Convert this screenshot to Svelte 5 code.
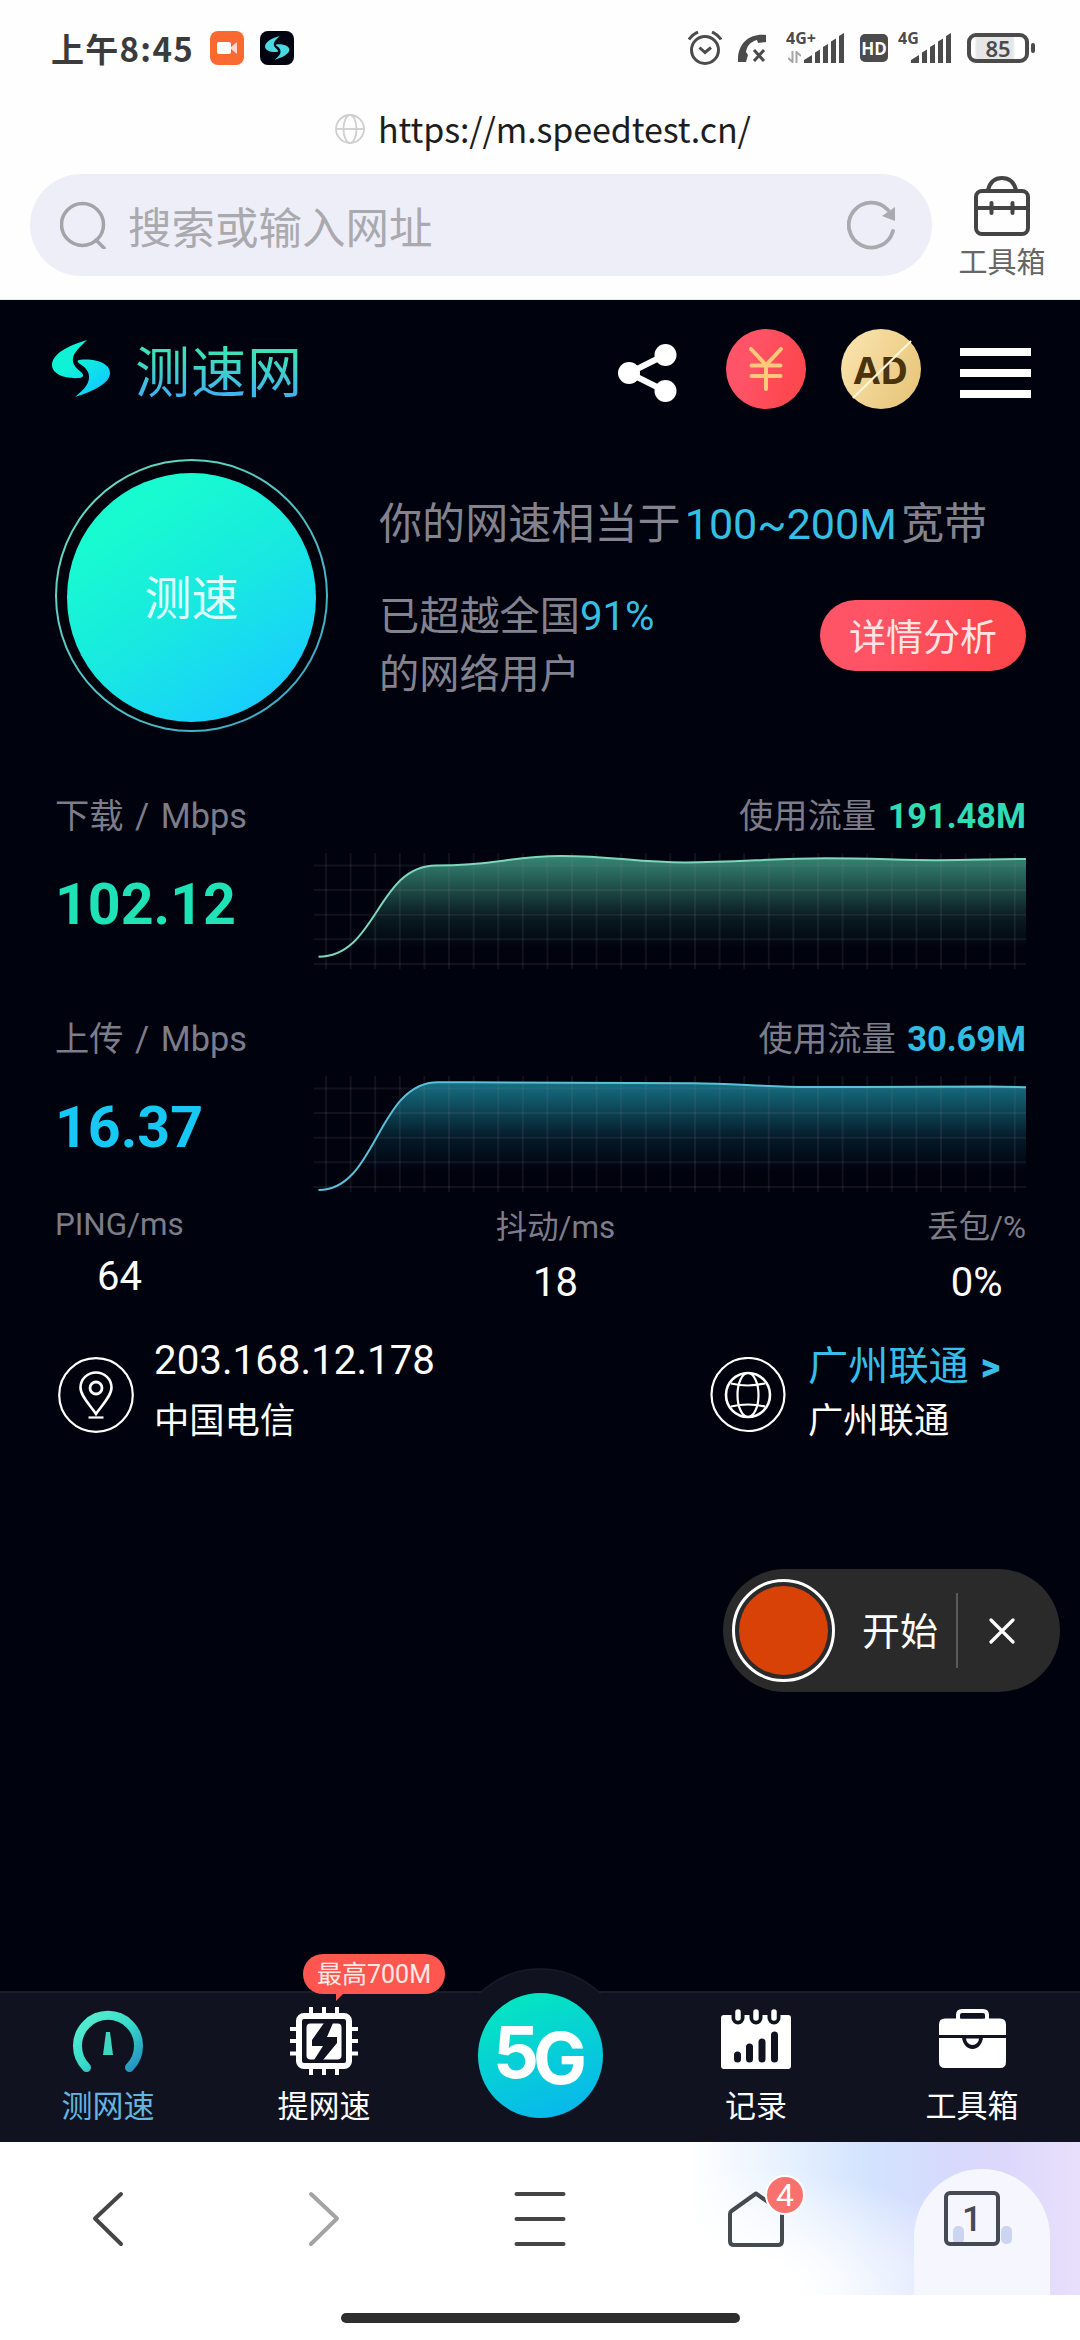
<script>
const vLines = Array.from({ length: 29 }, (_, i) => 12 + i * 24.6);
const hLines = Array.from({ length: 5 }, (_, i) => 12.5 + i * 24.6);

const speeds = [
  {
    id: "down",
    label: "下载 / Mbps",
    value: "102.12",
    used: "191.48M",
    color: "#3f9f87",
    line: "#7fd6bd",
    path: "M4.5 103.7 C63 103.7 63 12.5 122 12.5 C185 12.5 195 3 247 3 C300 3 322 9.5 371 9.5 C425 9.5 458 5.2 512 5.2 C560 5.2 585 7.2 622 7.2 C660 7.2 680 6 712 6",
  },
  {
    id: "up",
    label: "上传 / Mbps",
    value: "16.37",
    used: "30.69M",
    color: "#1a8ba0",
    line: "#5cc0d8",
    path: "M4.5 114 C63 114 63 6.2 124 6.2 C200 6.2 270 7.4 380 7.2 C420 7.4 450 11 495 11 C560 11.2 640 10.5 676 10.5 L712 11.2",
  },
];

const stats = [
  { label: "PING/ms", value: "64" },
  { label: "抖动/ms", value: "18", cjk: true },
  { label: "丢包/%", value: "0%", cjk: true },
];
</script>

{#snippet signal()}
  <svg class="signal" width="40" height="30" viewBox="0 0 40 30" fill="#4b4b4b">
    <path d="M0 30v-3l8-5v8z" />
    <path d="M11 19.5l5-3V30h-5z" />
    <path d="M19 14l5-3v19h-5z" />
    <path d="M27 8.500l5-3V30h-5z" />
    <path d="M35 3l5-3v30h-5z" />
  </svg>
{/snippet}

{#snippet swoosh()}
  <path d="M35 0 C14 6 0 15 0 25 C0 34 13 39 27 38 C32 37.500 32 35 29 32 C24 28 20 24 21 18 C22 12 29 6 35 0Z" />
  <path d="M27 20 C43 18 58 23 58 33 C58 43 42 51 23 57 C31 50 37 45 37 37 C37 31 33 27 28 24 C25 22 25 20.500 27 20Z" />
{/snippet}

<div class="screen">
  <div class="status">
    <span class="clock">上午8:45</span>
    <svg class="app-icon" width="34" height="34" viewBox="0 0 34 34">
      <rect width="34" height="34" rx="8" fill="#fb6930" />
      <rect x="7" y="11" width="14" height="12" rx="2" fill="#fff" />
      <path d="M21 16l6-5v12l-6-5z" fill="#ffd9c8" />
    </svg>
    <svg class="app-icon" width="34" height="34" viewBox="0 0 34 34">
      <rect width="34" height="34" rx="8" fill="#020311" />
      <g transform="translate(5 5) scale(.42)" fill="#4ad9e0">{@render swoosh()}</g>
    </svg>
    <div class="status-right">
      <svg width="34" height="34" viewBox="0 0 34 34" fill="none" stroke="#4b4b4b" stroke-width="3">
        <circle cx="17" cy="19" r="13.500" />
        <path d="M11.500 16.500l5.500 5 6-5M1 8.500q3-5 9-7.500M33 8.500q-3-5-9-7.500" />
      </svg>
      <svg class="call" width="29" height="29" viewBox="0 0 29 29">
        <path d="M0 28C-1 10 11-1 28 1v7l-8 1-1-3C12 8 9 12 8 18l2 3-2 7z" fill="#4b4b4b" />
        <path d="M16 16l10 11M26 16L16 27" fill="none" stroke="#4b4b4b" stroke-width="3" />
      </svg>
      <div class="net">
        <span class="net-label">4G+</span>
        <svg class="updown" width="13" height="12" viewBox="0 0 13 12" fill="none" stroke="#a5a5a5" stroke-width="2">
          <path d="M4.500 0v11L0 7M8.500 12V1L13 5" />
        </svg>
        {@render signal()}
      </div>
      <span class="hd">HD</span>
      <div class="net second">
        <span class="net-label">4G</span>
        {@render signal()}
      </div>
      <span class="battery"><b>85</b></span>
      <i class="nub"></i>
    </div>
  </div>

  <div class="address">
    <svg width="30" height="30" viewBox="0 0 30 30" fill="none" stroke="#cfcfcf" stroke-width="1.800">
      <circle cx="15" cy="15" r="14" />
      <ellipse cx="15" cy="15" rx="6.500" ry="14" />
      <path d="M1 15h28" />
    </svg>
    <span>https://m.speedtest.cn/</span>
  </div>

  <div class="search-row">
    <div class="search">
      <svg width="46" height="48" viewBox="0 0 46 48" fill="none" stroke="#a3a3a8" stroke-width="3.500" stroke-linecap="round">
        <circle cx="22.500" cy="23.500" r="21" />
        <path d="M36 39l8 8" />
      </svg>
      <span>搜索或输入网址</span>
      <svg class="reload" width="49" height="50" viewBox="0 0 49 50">
        <path d="M46 31A22.500 22.500 0 1 1 41 10" fill="none" stroke="#a9a9ae" stroke-width="3.800" stroke-linecap="round" />
        <path d="M48 7v14l-13-5z" fill="#a9a9ae" />
      </svg>
    </div>
    <div class="toolbox">
      <svg width="58" height="60" viewBox="0 0 58 60" fill="none" stroke="#444" stroke-width="4" stroke-linecap="round">
        <path d="M15 14Q18 2 29 2T43 14" />
        <rect x="3" y="15" width="52" height="43" rx="6" />
        <path d="M3 32h52M18.500 27v10M39.500 27v10" />
      </svg>
      <span>工具箱</span>
    </div>
  </div>

  <main>
    <header>
      <svg width="58" height="58" viewBox="0 0 58 58" fill="url(#brand)">
        <defs>
          <linearGradient id="brand" gradientUnits="userSpaceOnUse" x1="10" y1="5" x2="45" y2="52">
            <stop offset=".35" stop-color="#10f2d6" />
            <stop offset="1" stop-color="#10ccff" />
          </linearGradient>
        </defs>
        {@render swoosh()}
      </svg>
      <span class="brand-name">测速网</span>
      <svg class="share" width="59" height="58" viewBox="0 0 59 58" fill="#fff">
        <path d="M47 11L11 29l36 18" fill="none" stroke="#fff" stroke-width="6" />
        <circle cx="11" cy="29" r="11" />
        <circle cx="47.500" cy="11" r="11" />
        <circle cx="47.500" cy="47" r="11" />
      </svg>
      <div class="coin yen">
        <svg width="34" height="44" viewBox="0 0 34 44" fill="none" stroke="#ffc977" stroke-width="4" stroke-linecap="round">
          <path d="M2 2l15 16L32 2M17 18v24M2.500 18.500h29M2.500 29h29" />
        </svg>
      </div>
      <div class="coin ad">
        <span>AD</span>
        <svg width="80" height="80" viewBox="0 0 80 80"><path d="M12 69L70 12" stroke="#fff5d8" stroke-width="2.200" /></svg>
      </div>
      <div class="menu"><i></i><i></i><i></i></div>
    </header>

    <section class="hero">
      <div class="ring"><button class="start">测速</button></div>
      <div class="summary">
        <p class="equal">你的网速相当于<em>100~200M</em>宽带</p>
        <div class="rank">
          <p>已超越全国<em>91%</em><br />的网络用户</p>
          <button class="detail">详情分析</button>
        </div>
      </div>
    </section>

    {#each speeds as s (s.id)}
      <section class="speed {s.id}">
        <div class="speed-head">
          <span>{s.label}</span>
          <span>使用流量 <b>{s.used}</b></span>
        </div>
        <div class="speed-body">
          <strong>{s.value}</strong>
          <svg width="712" height="116" viewBox="0 0 712 116" fill="none">
            <defs>
              <linearGradient id="fill-{s.id}" gradientUnits="userSpaceOnUse" x1="0" y1="0" x2="0" y2="96">
                <stop offset="0" stop-color={s.color} stop-opacity=".88" />
                <stop offset=".35" stop-color={s.color} stop-opacity=".5" />
                <stop offset=".65" stop-color={s.color} stop-opacity=".17" />
                <stop offset="1" stop-color={s.color} stop-opacity="0" />
              </linearGradient>
            </defs>
            <path d="{s.path} V116 H4.500Z" fill="url(#fill-{s.id})" />
            <g stroke="#8c8296" stroke-opacity=".13" stroke-width="2">
              {#each vLines as x}
                <path d="M{x} 0V116" />
              {/each}
              {#each hLines as y}
                <path d="M0 {y}H712" />
              {/each}
            </g>
            <path d={s.path} stroke={s.line} stroke-width="2" />
          </svg>
        </div>
      </section>
    {/each}

    <section class="stats">
      {#each stats as s}
        <div class="stat" class:cjk={s.cjk}>
          <span>{s.label}</span>
          <b>{s.value}</b>
        </div>
      {/each}
    </section>

    <section class="nodes">
      <svg class="pin" width="76" height="76" viewBox="0 0 76 76" fill="none" stroke="#fff" stroke-width="2.200">
        <circle cx="38" cy="38" r="36.800" />
        <path d="M38 57C32 48 22.500 39 22.500 30.500a15.500 15 0 0 1 31 0C53.500 39 44 48 38 57Z" stroke-width="2.600" />
        <circle cx="38" cy="31" r="6" stroke-width="2.800" />
        <path d="M30.500 60.500h15" />
      </svg>
      <div class="node">
        <span class="ip">203.168.12.178</span>
        <span class="isp">中国电信</span>
      </div>
      <svg class="globe" width="76" height="76" viewBox="0 0 76 76" fill="none" stroke="#fff" stroke-width="2.200">
        <circle cx="38" cy="37.500" r="36.500" />
        <circle cx="38" cy="38" r="22" stroke-width="2.600" />
        <ellipse cx="38" cy="38" rx="10.500" ry="22" />
        <path d="M21 26.500q17 4 34 0M21 49.500q17-4 34 0" />
      </svg>
      <div class="node server">
        <span class="city">广州联通 <b>&gt;</b></span>
        <span class="isp">广州联通</span>
      </div>
    </section>

    <div class="recorder">
      <div class="record"><i></i></div>
      <span>开始</span>
      <svg width="26" height="26" viewBox="0 0 26 26" stroke="#fff" stroke-width="3.200" stroke-linecap="round">
        <path d="M2 2l22 22M24 2L2 24" />
      </svg>
    </div>

    <nav class="tabs">
      <div class="bump"></div>
      <div class="tab active">
        <svg width="70" height="68" viewBox="0 0 70 68">
          <defs>
            <linearGradient id="gauge" x1="0" y1="0" x2="1" y2="1">
              <stop offset="0" stop-color="#5cf0d0" />
              <stop offset=".5" stop-color="#38dccb" />
              <stop offset="1" stop-color="#2391c0" />
            </linearGradient>
          </defs>
          <path d="M13.500 60.500A30.500 30.500 0 1 1 56.500 60.500" fill="none" stroke="url(#gauge)" stroke-width="9" stroke-linecap="round" />
          <path d="M33 25h4l3 23H30z" fill="#3fd5c0" />
        </svg>
        <span>测网速</span>
      </div>
      <div class="tab">
        <svg width="68" height="68" viewBox="0 0 68 68">
          <path d="M21 0v8M34 0v8M47 0v8M21 60v8M34 60v8M47 60v8M0 22h8M0 34h8M0 46.500h8M60 22h8M60 34h8M60 46.500h8" stroke="#fff" stroke-width="4" />
          <rect x="9" y="9" width="50" height="50" rx="5" fill="none" stroke="#fff" stroke-width="6" />
          <rect x="16.500" y="16.500" width="35" height="36" rx="4" fill="#fff" />
          <path d="M34 16h9l-6 14h10v6L33 53h-9l9-14H22v-6z" fill="#10131f" />
        </svg>
        <span>提网速</span>
        <div class="promo">最高700M</div>
      </div>
      <div class="tab five"><div class="disc"><span>5</span><span class="g">G</span></div></div>
      <div class="tab">
        <svg width="70" height="68" viewBox="0 0 70 68">
          <rect x="0" y="8" width="70" height="54" rx="3" fill="#fff" />
          <path d="M17 4v7M35 4v7M53 4v7" stroke="#10131f" stroke-width="13" stroke-linecap="round" />
          <path d="M17 5v6M35 5v6M53 5v6" stroke="#fff" stroke-width="5.500" stroke-linecap="round" />
          <path d="M16.500 48v4M28.500 40v12M41 35v17M53.500 28v24" stroke="#10131f" stroke-width="7" stroke-linecap="round" />
        </svg>
        <span>记录</span>
      </div>
      <div class="tab">
        <svg width="67" height="68" viewBox="0 0 67 68">
          <path d="M19 12V8q0-4 4-4h21q4 0 4 4v4" fill="none" stroke="#fff" stroke-width="4" />
          <path d="M6 11.500h55q6 0 6 6V28H0V17.500q0-6 6-6zM0 31h67v24q0 6-6 6H6q-6 0-6-6z" fill="#fff" />
          <path d="M22 8.500h22.500v3H22zM23 29a10.500 13 0 0 0 21 0z" fill="#10131f" />
          <path d="M27 31.500h13a6.500 6.500 0 0 1-13 0z" fill="#fff" />
        </svg>
        <span>工具箱</span>
      </div>
    </nav>
  </main>

  <div class="browser-nav">
    <div class="slot">
      <svg width="32" height="56" viewBox="0 0 32 56"><path d="M29 3L3 27.500L29 53" stroke="#454545" /></svg>
    </div>
    <div class="slot">
      <svg width="32" height="56" viewBox="0 0 32 56"><path d="M3 3l26 24.500L3 53" stroke="#a3a3a3" /></svg>
    </div>
    <div class="slot">
      <svg width="52" height="56" viewBox="0 0 52 56"><path d="M2.500 3h47M2.500 28h47M2.500 53h47" stroke="#454545" /></svg>
    </div>
    <div class="slot">
      <svg width="56" height="56" viewBox="0 0 56 56"><path d="M28 2.500L3.500 20Q2 21 2 23V50Q2 54 6 54H50Q54 54 54 50V21z" stroke="#454a4f" /></svg>
      <span class="count">4</span>
    </div>
    <div class="slot">
      <div class="ghost"><i></i><i></i></div>
      <span class="windows">1</span>
    </div>
  </div>
  <div class="home-bar"><i></i></div>
</div>

<style>
:global(body) {
  margin: 0;
  background: #fff;
}

.screen {
  display: flex;
  flex-direction: column;
  width: 1080px;
  height: 2340px;
  overflow: hidden;
  background: #fefefe;
  font-family: Roboto, "Noto Sans CJK SC", sans-serif;
}
svg {
  display: block;
  flex: none;
}
p {
  margin: 0;
}
button {
  border: none;
  padding: 0;
  font: inherit;
}

.status {
  display: flex;
  align-items: center;
  height: 96px;
  padding: 0 45px 0 51px;
}
.clock {
  width: 159px;
  color: #3b3b3b;
  font: 700 33px/36px "Noto Sans CJK SC", sans-serif;
  letter-spacing: 1.300px;
  white-space: nowrap;
}
.app-icon + .app-icon {
  margin-left: 16px;
}
.status-right {
  display: flex;
  align-items: center;
  margin-left: auto;
  color: #4b4b4b;
}
.call {
  margin-left: 16px;
}
.net {
  position: relative;
  display: flex;
  align-items: flex-end;
  justify-content: flex-end;
  width: 58px;
  height: 30px;
  margin-left: 19px;
}
.net.second {
  width: 53px;
  margin-left: 10px;
}
.net-label {
  position: absolute;
  top: -4px;
  left: 0;
  font: 700 16px/18px "Open Sans", sans-serif;
}
.updown {
  position: absolute;
  left: 2px;
  bottom: 0;
}
.hd {
  width: 28px;
  height: 28px;
  margin-left: 16px;
  border-radius: 5px;
  background: #4b4b4b;
  color: #fff;
  font: 700 17px/30px "Open Sans", sans-serif;
  text-align: center;
}
.battery {
  box-sizing: border-box;
  width: 62px;
  height: 30px;
  margin-left: 16px;
  border: 4px solid #4b4b4b;
  border-radius: 9px;
  background: linear-gradient(90deg, #fff 3px, #e6e6e6 6px, #e6e6e6 42px, #fff 44px);
  text-align: center;
}
.battery b {
  display: block;
  font: 600 22px/23px "Noto Sans", sans-serif;
}
.nub {
  width: 4px;
  height: 10px;
  margin-left: 2px;
  border-radius: 2px;
  background: #4b4b4b;
}

.address {
  display: flex;
  align-items: center;
  height: 66px;
  padding-left: 335px;
}
.address span {
  margin-left: 13px;
  color: #1d1d1d;
  font: 400 34px/50px "Noto Sans CJK SC", sans-serif;
  letter-spacing: -.1px;
}

.search-row {
  box-sizing: border-box;
  display: flex;
  height: 138px;
  padding: 12px 0 0 30px;
  border-bottom: 1px solid #e9e9ec;
}
.search {
  box-sizing: border-box;
  display: flex;
  flex: none;
  align-items: center;
  width: 902px;
  height: 102px;
  padding: 0 36px 0 30px;
  border-radius: 51px;
  background: #eeeef8;
}
.search span {
  margin-left: 22px;
  color: #a9a9ae;
  font-size: 43.500px;
}
.reload {
  margin-left: auto;
}
.toolbox {
  display: flex;
  flex-direction: column;
  align-items: center;
  width: 140px;
  margin-top: 2px;
}
.toolbox span {
  margin-top: 8px;
  color: #666;
  font-size: 29px;
  line-height: 38px;
}

main {
  position: relative;
  display: flex;
  flex-direction: column;
  height: 1842px;
  background: #00020e;
  color: #fff;
}
header {
  display: flex;
  align-items: center;
  height: 80px;
  padding: 29px 49px 0 52px;
}
.brand-name {
  margin: 7px 0 0 25px;
  background: linear-gradient(#3fe0b8 25%, #3fb4ee 80%);
  background-clip: text;
  color: transparent;
  font-size: 55px;
  font-weight: 400;
  line-height: 70px;
  letter-spacing: 1px;
}
.share {
  margin-top: 7px;
  margin-left: auto;
}
.coin {
  display: grid;
  place-items: center;
  width: 80px;
  height: 80px;
  border-radius: 50%;
}
.yen {
  margin-left: 49px;
  background: linear-gradient(110deg, #ff5468 30%, #fd4850 75%);
}
.ad {
  margin-left: 35px;
  background: linear-gradient(120deg, #fbe6b2, #e6c274);
}
.ad > * {
  grid-area: 1 / 1;
}
.ad span {
  color: #4b330c;
  font: 700 38px/40px "Open Sans", sans-serif;
}
.menu {
  display: grid;
  gap: 13px;
  width: 71px;
  margin: 7px 0 0 39px;
}
.menu i {
  height: 8px;
  background: #fff;
}

.hero {
  display: flex;
  height: 273px;
  margin: 50px 54px 0 55px;
}
.ring {
  box-sizing: border-box;
  display: grid;
  flex: none;
  place-items: center;
  width: 273px;
  height: 273px;
  border: 2px solid transparent;
  border-radius: 50%;
  background: linear-gradient(#00010a, #00010a) padding-box, linear-gradient(135deg, #6fe0c0, #35a5c8) border-box;
}
.start {
  width: 249px;
  height: 249px;
  padding-bottom: 5px;
  margin-top: 3px;
  border-radius: 50%;
  background: linear-gradient(145deg, #18fbd0 20%, #18e9e0 52%, #18cdff 88%);
  color: #dcfffc;
  font-size: 47px;
}
.summary {
  flex: 1;
  padding-top: 37px;
  margin-left: 51px;
  color: #83828f;
}
.summary em {
  color: #35bfe2;
  font-style: normal;
}
.equal {
  font-size: 43.100px;
  line-height: 58px;
  white-space: nowrap;
}
.equal em {
  margin: 0 4px;
}
.rank {
  display: flex;
  justify-content: space-between;
  margin-top: 34px;
  font-size: 40.200px;
  line-height: 58px;
}
.detail {
  width: 206px;
  height: 71px;
  padding-top: 6px;
  margin-top: 12px;
  border-radius: 36px;
  background: linear-gradient(100deg, #ff5366 30%, #fc474d 80%);
  color: #ffe4e6;
  font-size: 37px;
}

.speed {
  height: 172px;
  margin: 64px 54px 0 55px;
}
.speed.up {
  margin-top: 51px;
}
.speed-head {
  display: flex;
  justify-content: space-between;
  color: #7d7c89;
  font-size: 34.300px;
  line-height: 40px;
}
.speed-head span:first-child {
  word-spacing: 3px;
}
.speed-head b {
  margin-left: 3px;
  color: #2fdcb4;
}
.up .speed-head b {
  color: #31bde2;
}
.speed-body {
  display: flex;
  justify-content: space-between;
  margin-top: 17px;
}
.speed strong {
  margin-top: 23px;
  color: #1fe3b7;
  font-size: 57.300px;
  line-height: 58px;
}
.speed.up strong {
  color: #18c8f4;
}

.stats {
  display: flex;
  justify-content: space-between;
  margin: 16px 54px 0 55px;
}
.stat {
  display: flex;
  flex-direction: column;
  align-items: center;
  gap: 10px;
}
.stat span {
  color: #7d7c89;
  font-size: 31.400px;
  line-height: 36px;
}
.stat.cjk span {
  line-height: 42px;
}
.stat b {
  font-size: 40px;
  font-weight: 400;
  line-height: 47px;
}

.nodes {
  display: flex;
  margin: 25px 54px 0 58px;
}
.pin, .globe {
  margin-top: 26px;
}
.globe {
  margin-left: auto;
}
.node {
  display: flex;
  flex-direction: column;
  margin-left: 20px;
}
.ip, .isp {
  font-size: 40.300px;
  line-height: 60px;
}
.isp {
  font-size: 35.300px;
}
.server {
  width: 218px;
  padding-top: 9px;
  margin-left: 22px;
}
.server span {
  line-height: 54px;
}
.city {
  color: #35bfe8;
  font-size: 40.200px;
}
.city b {
  margin-left: 2px;
  font-size: 38px;
  font-weight: 900;
}

.recorder {
  position: absolute;
  top: 1269px;
  right: 20px;
  box-sizing: border-box;
  display: flex;
  align-items: center;
  width: 337px;
  height: 123px;
  padding: 0 45px 0 9px;
  border-radius: 62px;
  background: #2a2a2b;
}
.record {
  box-sizing: border-box;
  display: grid;
  place-items: center;
  width: 103px;
  height: 103px;
  border: 3px solid #fff;
  border-radius: 50%;
}
.record i {
  width: 89px;
  height: 89px;
  border-radius: 50%;
  background: #d84207;
}
.recorder span {
  width: 94px;
  padding-top: 3px;
  margin-left: 27px;
  border-right: 2px solid #5a5a5a;
  font-size: 38px;
  line-height: 72px;
}
.recorder svg {
  margin-left: auto;
}

.tabs {
  position: relative;
  display: flex;
  height: 149px;
  margin-top: auto;
  border-top: 2px solid #1b1d2a;
  background: #10131f;
}
.bump {
  position: absolute;
  top: -25px;
  left: 453px;
  width: 174px;
  height: 26px;
  background: radial-gradient(circle at 87px 87px, #10131f 85px, #1b1d2a 86px, transparent 87.500px);
}
.tab {
  position: relative;
  display: flex;
  flex: 1;
  flex-direction: column;
  align-items: center;
  padding-top: 14px;
}
.tab > span {
  margin-top: 12px;
  font-size: 31px;
  line-height: 40px;
}
.tab.active span {
  color: #64b4e2;
}
.promo {
  position: absolute;
  top: -39px;
  left: 87px;
  width: 142px;
  height: 40px;
  border-radius: 20px;
  background: #ff5750;
  color: #ffe9e6;
  font-size: 25px;
  line-height: 41px;
  text-align: center;
}
.promo::after {
  content: "";
  position: absolute;
  top: 39px;
  left: 33px;
  border-top: 8px solid #ff5750;
  border-right: 8px solid transparent;
}
.tab.five {
  padding-top: 0;
}
.disc {
  display: flex;
  justify-content: center;
  width: 125px;
  height: 125px;
  border-radius: 50%;
  background: linear-gradient(160deg, #04e6c0 8%, #08b8ec 90%);
  font: 700 72px/117px Inter, sans-serif;
  letter-spacing: -6px;
}
.g {
  margin-top: 6px;
  letter-spacing: 0;
}

.browser-nav {
  display: flex;
  height: 153px;
  background:
    radial-gradient(ellipse 340px 130px at 680px 150px, #fff 35%, rgba(255, 255, 255, 0) 100%),
    linear-gradient(90deg, #fff 690px, #e6f1fe 790px, #d3e3fe 870px, #d6dafd 950px, #dcd7fb 1000px, #e8e0fb 1080px);
}
.slot {
  position: relative;
  display: grid;
  flex: 1;
  place-items: center;
}
.slot svg {
  fill: none;
  stroke-width: 4;
  stroke-linecap: round;
  stroke-linejoin: round;
}
.count {
  position: absolute;
  top: 33px;
  left: 117px;
  width: 36px;
  height: 36px;
  border: 2px solid #fff;
  border-radius: 50%;
  background: #f9716d;
  color: #fff;
  font-size: 32px;
  line-height: 36px;
  text-align: center;
}
.ghost {
  position: absolute;
  top: 27px;
  left: 50px;
  width: 136px;
  height: 126px;
  border-radius: 68px 68px 0 0;
  background: #f6f7fe;
}
.ghost i {
  position: absolute;
  top: 57px;
  left: 39px;
  width: 11px;
  height: 18px;
  border-radius: 5px;
  background: #ccd5f0;
}
.ghost i + i {
  left: 87px;
}
.windows {
  position: relative;
  box-sizing: border-box;
  width: 56px;
  height: 55px;
  border: 4px solid #454a54;
  border-radius: 6px;
  color: #454a54;
  font-size: 35px;
  font-weight: 500;
  line-height: 49px;
  text-align: center;
}
.home-bar {
  flex: 1;
  background: #fff;
}
.home-bar i {
  display: block;
  width: 399px;
  height: 10px;
  margin: 18px auto 0;
  border-radius: 5px;
  background: #2e2e2e;
}
</style>
